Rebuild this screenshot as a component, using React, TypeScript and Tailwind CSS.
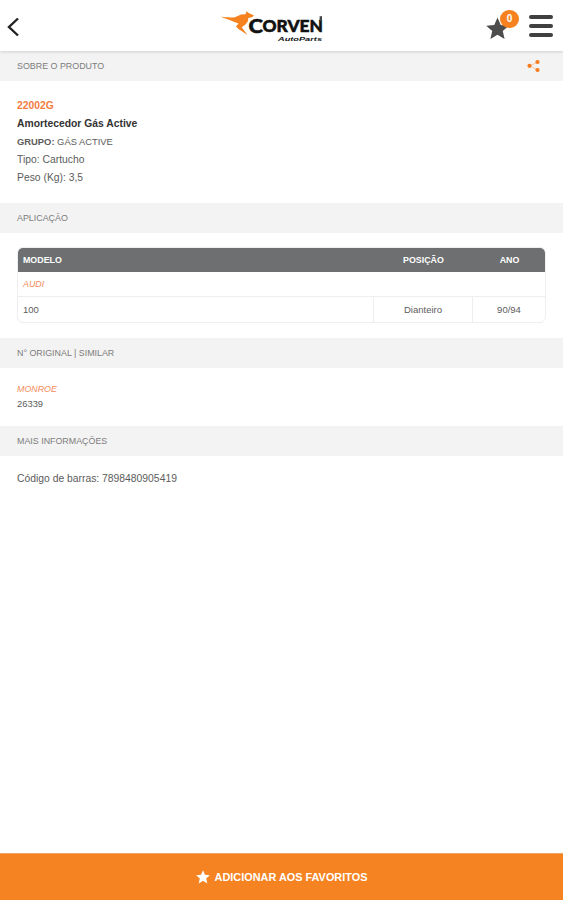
import React from 'react';

const SectionTitle: React.FC<{ title: string; children?: React.ReactNode }> = ({ title, children }) => (
  <div className="flex h-[30px] items-center justify-between bg-[#f3f3f3] pl-[17px] pr-[22px] text-[8.9px] text-[#7c7c7c]">
    <span className="pt-[2px]">{title}</span>
    {children}
  </div>
);

const Star: React.FC<{ className: string }> = ({ className }) => (
  <svg viewBox="0 0 24 24" fill="currentColor" className={className}>
    <path d="M12 0.6l3.4 7.7 8.4 0.8-6.3 5.6 1.9 8.3-7.4-4.4-7.4 4.4 1.9-8.3L0.2 9.1l8.4-0.8z" />
  </svg>
);

const Logo: React.FC = () => (
  <svg viewBox="0 0 106 34" className="-ml-[15px] h-[34px] w-[106px]">
    <path
      d="M.5 7.800C6 8.200 11 8.800 15 8.200L21 5.500 25.500 5.200 26.500 2.300 28.700 4 34 6.500 32 8.300 28.300 8.900 28 12 25.500 15.500 21.700 18.200 27.500 26 18.500 20 16 17.500 18.500 14.500 12 12C8 10.500 4 9.300.5 7.800z"
      fill="#f5821f"
    />
    <g fill="#111" stroke="#111" strokeWidth="0.500" fontFamily="Lato, 'Liberation Sans', sans-serif" fontWeight="900">
      <text x="28.500" y="23.500" fontSize="19" textLength="14.500" lengthAdjust="spacingAndGlyphs">C</text>
      <text x="42.500" y="22.600" fontSize="16.500" textLength="60.500" lengthAdjust="spacingAndGlyphs">ORVEN</text>
    </g>
    <path d="M99.600 12V7.200h2.400V12z" fill="#444" />
    <text x="58" y="31.500" fontFamily="'Liberation Sans', sans-serif" fontWeight="700" fontStyle="italic" fontSize="6" fill="#111" textLength="44" lengthAdjust="spacingAndGlyphs">AutoParts</text>
  </svg>
);

const App: React.FC = () => {
  return (
    <div className="flex h-[900px] w-full flex-col bg-white font-['Liberation_Sans',Arial,sans-serif] text-[#5c5c5c]">
      <header className="relative z-10 grid h-[51px] shrink-0 grid-cols-3 items-center bg-white pl-[7px] pr-[10px] shadow-[0_1px_3px_rgba(0,0,0,0.15)]">
        <svg viewBox="0 0 12 20" className="mt-[3px] h-5 w-3" fill="none" stroke="#222" strokeWidth="2.4">
          <path d="M11 1.500L2 10l9 8.500" />
        </svg>
        <div className="flex justify-center">
          <Logo />
        </div>
        <div className="flex items-center justify-end gap-[20px]">
          <div className="relative mt-[5px]">
            <Star className="h-[23px] w-[23px] text-[#4d4d4d]" />
            <span className="absolute -top-[7px] left-[14px] flex h-[18px] w-[19px] items-center justify-center rounded-full bg-[#f5821f] text-[10px] font-bold text-white">
              0
            </span>
          </div>
          <div className="flex w-6 flex-col gap-[5px]">
            <span className="h-1 rounded-full bg-[#404040]" />
            <span className="h-1 rounded-full bg-[#404040]" />
            <span className="h-1 rounded-full bg-[#404040]" />
          </div>
        </div>
      </header>

      <SectionTitle title="SOBRE O PRODUTO">
        <svg viewBox="0 0 14 14" className="h-[14px] w-[14px]" fill="#f47b20">
          <path d="M10.500 3L3 7l7.500 4" fill="none" stroke="#f9c49c" strokeWidth="1" />
          <circle cx="2.500" cy="6.800" r="2.100" />
          <circle cx="10.500" cy="3" r="2.100" />
          <circle cx="10.500" cy="11" r="2.100" />
        </svg>
      </SectionTitle>
      <div className="h-[122px] pl-[17px] pt-[16px] text-[10.35px] leading-[18.1px]">
        <p className="font-bold text-[#f47b42]">22002G</p>
        <p className="font-bold text-[#333]">Amortecedor Gás Active</p>
        <p className="text-[9.4px]"><b>GRUPO:</b> GÁS ACTIVE</p>
        <p>Tipo: Cartucho</p>
        <p>Peso (Kg): 3,5</p>
      </div>

      <SectionTitle title="APLICAÇÃO" />
      <div className="h-[105px] px-[17px] pt-[14px]">
        <div className="overflow-hidden rounded-[6px] border border-[#eee]">
          <div className="-mx-px -mt-px grid h-[25px] grid-cols-[357px_99px_1fr] items-center bg-[#6d6f71] pt-[2px] text-center text-[8.85px] font-bold text-white">
            <span className="pl-[6px] text-left">MODELO</span>
            <span>POSIÇÃO</span>
            <span>ANO</span>
          </div>
          <div className="flex h-[25px] items-center border-b border-[#eee] pl-[5px] pt-[2px] text-[8.9px] italic text-[#f58b5a]">AUDI</div>
          <div className="grid h-[25px] grid-cols-[355px_100px_1fr] text-center text-[9.5px] leading-[25px]">
            <span className="pl-[5px] text-left">100</span>
            <span className="border-x border-[#eee]">Dianteiro</span>
            <span>90/94</span>
          </div>
        </div>
      </div>

      <SectionTitle title="N° ORIGINAL | SIMILAR" />
      <div className="h-[58px] pl-[17px] pt-[14px] leading-[15px]">
        <p className="text-[8.9px] italic text-[#f58b5a]">MONROE</p>
        <p className="-mt-px text-[9.4px]">26339</p>
      </div>

      <SectionTitle title="MAIS INFORMAÇÕES" />
      <p className="pl-[17px] pt-[15px] text-[10.35px] leading-4">Código de barras: 7898480905419</p>

      <button className="mt-auto flex h-[47px] shrink-0 items-center justify-center gap-[5px] border-t border-[#f0a366] bg-[#f58322] text-[10.9px] font-bold text-white">
        <Star className="h-[14px] w-[14px]" />
        ADICIONAR AOS FAVORITOS
      </button>
    </div>
  );
};

export default App;
